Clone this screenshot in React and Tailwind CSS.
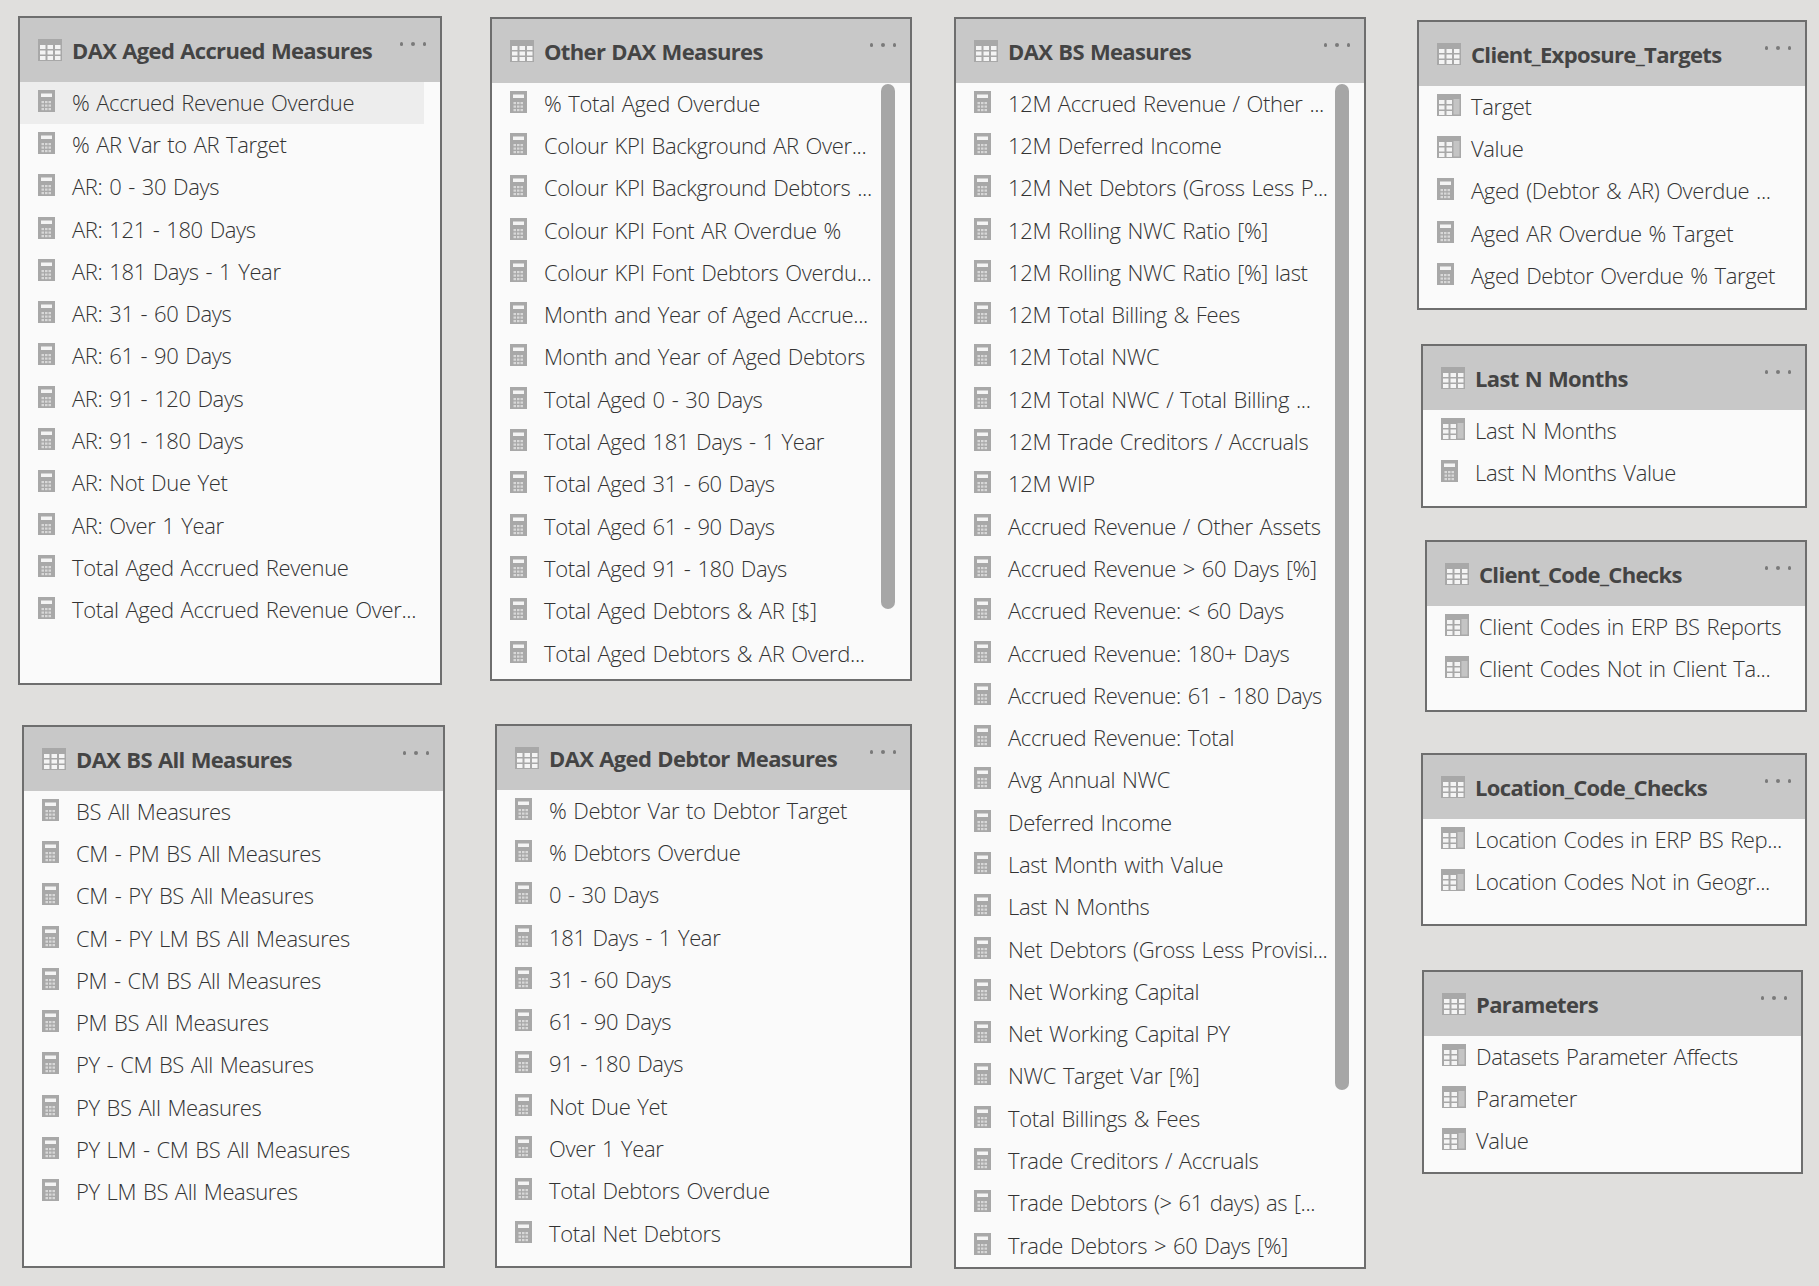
const cards = [
  { box: "left-[18px] top-[16px] w-[424px] h-[669px]", title: "DAX Aged Accrued Measures", selected: 0, rows: ["% Accrued Revenue Overdue","% AR Var to AR Target","AR: 0 - 30 Days","AR: 121 - 180 Days","AR: 181 Days - 1 Year","AR: 31 - 60 Days","AR: 61 - 90 Days","AR: 91 - 120 Days","AR: 91 - 180 Days","AR: Not Due Yet","AR: Over 1 Year","Total Aged Accrued Revenue","Total Aged Accrued Revenue Over..."] },
  { box: "left-[490px] top-[17px] w-[422px] h-[664px]", title: "Other DAX Measures", bar: "h-[525px]", rows: ["% Total Aged Overdue","Colour KPI Background AR Over...","Colour KPI Background Debtors ...","Colour KPI Font AR Overdue %","Colour KPI Font Debtors Overdu...","Month and Year of Aged Accrue...","Month and Year of Aged Debtors","Total Aged 0 - 30 Days","Total Aged 181 Days - 1 Year","Total Aged 31 - 60 Days","Total Aged 61 - 90 Days","Total Aged 91 - 180 Days","Total Aged Debtors & AR [$]","Total Aged Debtors & AR Overd..."] },
  { box: "left-[954px] top-[17px] w-[412px] h-[1252px]", title: "DAX BS Measures", bar: "h-[1006px]", rows: ["12M Accrued Revenue / Other ...","12M Deferred Income","12M Net Debtors (Gross Less P...","12M Rolling NWC Ratio [%]","12M Rolling NWC Ratio [%] last","12M Total Billing & Fees","12M Total NWC","12M Total NWC / Total Billing ...","12M Trade Creditors / Accruals","12M WIP","Accrued Revenue / Other Assets","Accrued Revenue > 60 Days [%]","Accrued Revenue: < 60 Days","Accrued Revenue: 180+ Days","Accrued Revenue: 61 - 180 Days","Accrued Revenue: Total","Avg Annual NWC","Deferred Income","Last Month with Value","Last N Months","Net Debtors (Gross Less Provisi...","Net Working Capital","Net Working Capital PY","NWC Target Var [%]","Total Billings & Fees","Trade Creditors / Accruals","Trade Debtors (> 61 days) as [...","Trade Debtors > 60 Days [%]"] },
  { box: "left-[1417px] top-[20px] w-[390px] h-[290px]", title: "Client_Exposure_Targets", columns: 2, rows: ["Target","Value","Aged (Debtor & AR) Overdue ...","Aged AR Overdue % Target","Aged Debtor Overdue % Target"] },
  { box: "left-[1421px] top-[344px] w-[386px] h-[164px]", title: "Last N Months", columns: 1, rows: ["Last N Months","Last N Months Value"] },
  { box: "left-[1425px] top-[540px] w-[382px] h-[172px]", title: "Client_Code_Checks", columns: 2, rows: ["Client Codes in ERP BS Reports","Client Codes Not in Client Ta..."] },
  { box: "left-[1421px] top-[753px] w-[386px] h-[173px]", title: "Location_Code_Checks", columns: 2, rows: ["Location Codes in ERP BS Rep...","Location Codes Not in Geogr..."] },
  { box: "left-[1422px] top-[970px] w-[381px] h-[204px]", title: "Parameters", columns: 3, rows: ["Datasets Parameter Affects","Parameter","Value"] },
  { box: "left-[22px] top-[725px] w-[423px] h-[543px]", title: "DAX BS All Measures", rows: ["BS All Measures","CM - PM BS All Measures","CM - PY BS All Measures","CM - PY LM BS All Measures","PM - CM BS All Measures","PM BS All Measures","PY - CM BS All Measures","PY BS All Measures","PY LM - CM BS All Measures","PY LM BS All Measures"] },
  { box: "left-[495px] top-[724px] w-[417px] h-[544px]", title: "DAX Aged Debtor Measures", rows: ["% Debtor Var to Debtor Target","% Debtors Overdue","0 - 30 Days","181 Days - 1 Year","31 - 60 Days","61 - 90 Days","91 - 180 Days","Not Due Yet","Over 1 Year","Total Debtors Overdue","Total Net Debtors"] },
];

function TableIcon() {
  const cells = [];
  [6, 11.5, 17].forEach((y) => [2, 9.5, 17].forEach((x) => cells.push([x, y])));
  return (
    <svg width="24" height="22" viewBox="0 0 24 22" className="shrink-0">
      <rect width="24" height="22" fill="#a8a8a8" />
      {cells.map(([x, y]) => <rect key={x + "-" + y} x={x} y={y} width="5.5" height="4" fill="#f4f4f4" />)}
    </svg>
  );
}

function ColumnIcon() {
  const cells = [];
  [6, 11.5, 17].forEach((y) => [2, 9.5].forEach((x) => cells.push([x, y])));
  return (
    <svg width="24" height="22" viewBox="0 0 24 22" className="shrink-0">
      <rect width="24" height="22" fill="#a8a8a8" />
      <rect x="16.5" y="5" width="6" height="15.5" fill="#c4c4c4" />
      {cells.map(([x, y]) => <rect key={x + "-" + y} x={x} y={y} width="5.5" height="4" fill="#f4f4f4" />)}
    </svg>
  );
}

function MeasureIcon() {
  const dots = [];
  [11, 14.5, 18].forEach((y) => [3.5, 7, 10.5].forEach((x) => dots.push([x, y])));
  return (
    <svg width="17" height="22" viewBox="0 0 17 22" className="shrink-0">
      <rect width="17" height="22" fill="#a8a8a8" />
      <rect x="3" y="3.5" width="11" height="3.5" fill="#f4f4f4" />
      {dots.map(([x, y]) => <rect key={x + "-" + y} x={x} y={y} width="2.5" height="2.2" fill="#d8d8d8" />)}
    </svg>
  );
}

function Card({ box, title, rows, columns = 0, selected, bar }) {
  return (
    <section className={"absolute flex flex-col overflow-hidden border-2 border-[#6e6e6e] bg-[#fafafa] " + box}>
      <header className="relative flex h-[64px] shrink-0 items-center bg-[#c8c8c8] pl-[18px]">
        <span className="flex w-[34px] shrink-0"><TableIcon /></span>
        <h2 className="whitespace-nowrap text-[22px] font-bold leading-none tracking-[-0.65px] [word-spacing:1px] text-[#444444]">{title}</h2>
        <div className="absolute right-[14px] top-[24px] flex gap-[8px]">
          <span className="size-[3.5px] rounded-full bg-[#7a7a7a]" />
          <span className="size-[3.5px] rounded-full bg-[#7a7a7a]" />
          <span className="size-[3.5px] rounded-full bg-[#7a7a7a]" />
        </div>
      </header>
      <ul className="relative flex flex-col">
        {rows.map((row, i) => (
          <li key={row} className={"flex h-[42.3px] items-center pb-[3px] pl-[18px] " + (i === selected ? "mr-[16px] bg-[#ededed]" : "")}>
            <span className="flex w-[34px] shrink-0 -translate-y-[1px]">
              {i < columns ? <ColumnIcon /> : <MeasureIcon />}
            </span>
            <span className="whitespace-nowrap text-[22px] font-light leading-none tracking-[-0.37px] [word-spacing:1.5px] text-[#333333]">{row}</span>
          </li>
        ))}
        {bar && <div className={"absolute right-[15px] top-[1px] w-[14px] rounded-full bg-[#a6a6a6] " + bar} />}
      </ul>
    </section>
  );
}

export default function App() {
  return (
    <main className="relative h-[1286px] w-full overflow-hidden bg-[#e0dfdd] font-['Open_Sans','Liberation_Sans',sans-serif]">
      {cards.map((c) => <Card key={c.title} {...c} />)}
    </main>
  );
}
